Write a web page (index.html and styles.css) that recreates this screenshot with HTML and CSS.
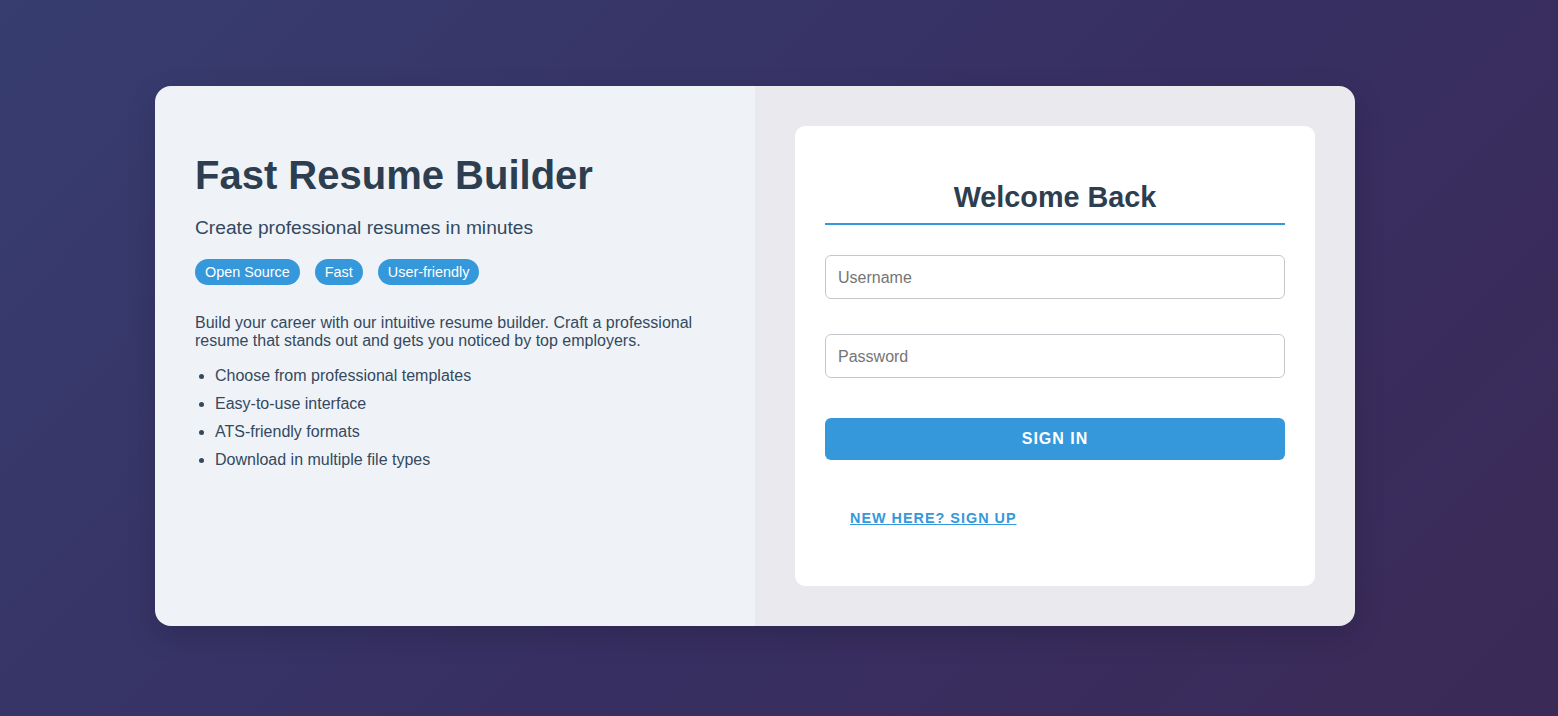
FILE: index.html
```html
<!DOCTYPE html>
<html lang="en">
<head>
<meta charset="utf-8">
<title>Fast Resume Builder</title>
<link rel="stylesheet" href="styles.css">
</head>
<body>
<div class="page">
  <div class="shell">
    <section class="intro">
      <h1 class="intro-title">Fast Resume Builder</h1>
      <p class="intro-sub">Create professional resumes in minutes</p>
      <div class="tags">
        <span class="tag">Open Source</span>
        <span class="tag">Fast</span>
        <span class="tag">User-friendly</span>
      </div>
      <p class="intro-text">Build your career with our intuitive resume builder. Craft a professional resume that stands out and gets you noticed by top employers.</p>
      <ul class="features">
        <li>Choose from professional templates</li>
        <li>Easy-to-use interface</li>
        <li>ATS-friendly formats</li>
        <li>Download in multiple file types</li>
      </ul>
    </section>
    <section class="auth">
      <div class="auth-card">
        <h2 class="auth-title">Welcome Back</h2>
        <form class="auth-form">
          <input class="field" type="text" placeholder="Username">
          <input class="field" type="password" placeholder="Password">
          <button class="btn-primary" type="button">SIGN IN</button>
        </form>
        <div class="switch"><a href="#" class="switch-link">NEW HERE? SIGN UP</a></div>
      </div>
    </section>
  </div>
</div>
</body>
</html>
```
FILE: styles.css
```css
html, body {
  margin: 0;
  height: 100%;
}
body {
  font-family: "Liberation Sans", Arial, sans-serif;
  background: linear-gradient(135deg, #373d70 0%, #372f62 55%, #3b2a57 100%);
  color: #2c3e50;
}
.page {
  padding: 86px 0 0 155px;
}
.shell {
  width: 1200px;
  height: 540px;
  display: flex;
  border-radius: 16px;
  overflow: hidden;
  box-shadow: 0 10px 30px rgba(0, 0, 0, 0.15);
}
.intro {
  width: 600px;
  box-sizing: border-box;
  padding: 40px;
  background: #eff3f8;
}
.intro-title {
  font-size: 40px;
  font-weight: 700;
  margin: 27px 0 19px;
  color: #2c3e50;
}
.intro-sub {
  font-size: 19.2px;
  margin: 0 0 20px;
  color: #34495e;
}
.tags {
  display: flex;
  gap: 15px;
  margin-bottom: 29px;
}
.tag {
  background: #3498db;
  color: #fff;
  font-size: 14.4px;
  padding: 5px 10px;
  border-radius: 13px;
  line-height: 16px;
}
.intro-text {
  font-size: 16px;
  margin: 0 0 17px;
  color: #34495e;
}
.features {
  margin: 0;
  padding-left: 20px;
  color: #34495e;
}
.features li {
  margin-bottom: 10px;
}
.auth {
  flex: 1;
  padding: 40px;
  background: #eae9ee;
  display: flex;
}
.auth-card {
  flex: 1;
  background: #fff;
  border-radius: 10px;
  padding: 30px;
}
.auth-title {
  font-size: 28.8px;
  text-align: center;
  margin: 25px 0 30px;
  padding-bottom: 9px;
  border-bottom: 2px solid #3498db;
  color: #2c3e50;
  line-height: 33px;
}
.auth-form {
  display: flex;
  flex-direction: column;
}
.field {
  font-family: inherit;
  font-size: 16px;
  height: 44px;
  box-sizing: border-box;
  padding: 1px 12px 0;
  border: 1px solid #c4c7cb;
  border-radius: 6px;
  margin-bottom: 35px;
  color: #333;
}
.field::placeholder {
  color: #757575;
}
.field + .field {
  margin-bottom: 40px;
}
.btn-primary {
  font-family: inherit;
  height: 42px;
  border: none;
  border-radius: 6px;
  background: #3498db;
  color: #fff;
  font-size: 16px;
  font-weight: 700;
  letter-spacing: 1px;
}
.switch {
  padding: 49px 0 0 25px;
}
.switch-link {
  color: #3498db;
  font-size: 14.4px;
  font-weight: 700;
  letter-spacing: 1px;
  text-decoration: underline;
}
```
